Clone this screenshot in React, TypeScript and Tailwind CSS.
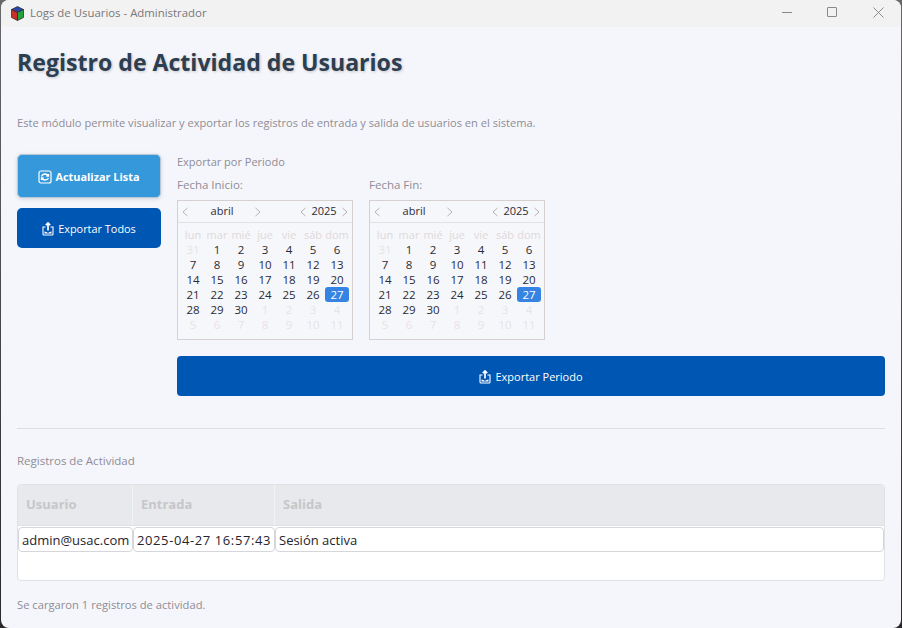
const font = "[font-family:'Open_Sans','Noto_Sans',sans-serif]";

const rows = [
  ['31', '1', '2', '3', '4', '5', '6'],
  ['7', '8', '9', '10', '11', '12', '13'],
  ['14', '15', '16', '17', '18', '19', '20'],
  ['21', '22', '23', '24', '25', '26', '27'],
  ['28', '29', '30', '1', '2', '3', '4'],
  ['5', '6', '7', '8', '9', '10', '11'],
];
const weekdays = ['lun', 'mar', 'mié', 'jue', 'vie', 'sáb', 'dom'];

function Chevron({ dir }: { dir: 'left' | 'right' }) {
  return (
    <svg width="8" height="10" viewBox="0 0 8 10" fill="none" stroke="#b4b4b8" strokeWidth="1">
      <path d={dir === 'left' ? 'M6.5 1 L2 5 L6.5 9' : 'M1.5 1 L6 5 L1.5 9'} />
    </svg>
  );
}

function ExportIcon() {
  return (
    <svg width="12" height="14" viewBox="0 0 12 14" fill="none" stroke="white" strokeWidth="1.1">
      <path d="M3.5 5 H1 V12 Q1 13 2 13 H10 Q11 13 11 12 V5 H8.5" />
      <path d="M6 8.5 V1 M3.8 3.2 L6 1 L8.2 3.2" strokeWidth="1.7" />
      <path d="M2.5 9.5 Q4.5 9.5 6 11 Q7.5 9.5 9.5 9.5 V11.5 H2.5 Z" fill="white" stroke="none" />
    </svg>
  );
}

function RefreshIcon() {
  return (
    <svg width="14" height="14" viewBox="0 0 14 14" fill="none" stroke="white" strokeWidth="1.2">
      <rect x="1" y="1" width="12" height="12" rx="2" />
      <path d="M3.5 6.5 Q4.5 4 7 4 Q9 4 10.5 6 M10.5 4 V6.2 H8.3" strokeWidth="1.3" />
      <path d="M10.5 8 Q9.5 10 7 10 Q5 10 3.5 8 M3.5 10 V7.8 H5.7" strokeWidth="1.3" />
    </svg>
  );
}

function Calendar() {
  return (
    <div className="w-[176px] h-[140px] border border-[#d6d0d0] bg-[#f6f7fb]">
      <div className="h-[22px] flex items-center border-b border-[#e2e0e2] text-[11px] text-[#2a2a35]">
        <div className="w-[3px]" />
        <Chevron dir="left" />
        <div className="w-[65px] pl-px text-center">abril</div>
        <Chevron dir="right" />
        <div className="flex-1" />
        <Chevron dir="left" />
        <div className="w-[34px] text-center">2025</div>
        <Chevron dir="right" />
        <div className="w-[3px]" />
      </div>
      <div className="grid grid-cols-[repeat(7,24px)] px-[3px] pt-[4px] text-[11.5px] leading-[15px] text-center whitespace-nowrap">
        {weekdays.map((d) => (
          <div key={d} className="text-[#e0d9d9] text-[11px]">{d}</div>
        ))}
        {rows.map((row, r) =>
          row.map((d, c) => {
            const muted = (r === 0 && c === 0) || (r === 4 && c > 2) || r === 5;
            const selected = d === '27';
            return (
              <div
                key={`${r}-${c}`}
                className={
                  selected
                    ? 'bg-[#3584e4] text-white rounded-[3px]'
                    : muted
                      ? 'text-[#e6e3e5]'
                      : 'text-[#2a2a35]'
                }
              >
                {d}
              </div>
            );
          })
        )}
      </div>
    </div>
  );
}

export default function App() {
  return (
    <div className={`w-[903px] h-[628px] bg-white overflow-hidden ${font}`}>
      <div className="w-[902px] h-[628px] pl-px pr-px bg-linear-to-b from-[#6a686a] to-[#2a282a]">
        <div className="w-[900px] h-[628px] rounded-[8px] bg-[#f5f6fb] overflow-hidden flex flex-col">
          {/* barra de titulo */}
          <div className="h-[27px] shrink-0 bg-[#f2f2f2] flex items-center pl-[9px]">
            <svg width="15" height="15" viewBox="0 0 15 15">
              <path d="M7.5 0.5 L13.5 3.5 L7.5 6.5 L1.5 3.5 Z" fill="#2b46a8" stroke="#222" strokeWidth="0.7" />
              <path d="M1.5 3.5 L7.5 6.5 V14.5 L1.5 11.5 Z" fill="#c9302c" stroke="#222" strokeWidth="0.7" />
              <path d="M13.5 3.5 L7.5 6.5 V14.5 L13.5 11.5 Z" fill="#22a33c" stroke="#222" strokeWidth="0.7" />
            </svg>
            <span className="ml-[5px] mb-px text-[11.4px] text-[#77777a]">Logs de Usuarios - Administrador</span>
            <div className="flex-1" />
            <div className="flex items-center mb-[3px]">
              <div className="w-[10px] h-px bg-[#8a8a8a] mr-[35px]" />
              <div className="w-[10px] h-[10px] border border-[#8a8a8a] rounded-[1px] mr-[36px]" />
              <svg width="11" height="11" viewBox="0 0 11 11" stroke="#8a8a8a" strokeWidth="1" className="mr-[17px]">
                <path d="M0.5 0.5 L10.5 10.5 M10.5 0.5 L0.5 10.5" />
              </svg>
            </div>
          </div>

          <div className="flex-1 pl-[16px] pr-[16px] flex flex-col">
            <h1 className="mt-[17px] text-[23.1px] leading-[36px] font-bold text-[#2c3e50] [text-shadow:1px_1px_3px_rgba(0,0,0,0.2)]">
              Registro de Actividad de Usuarios
            </h1>
            <p className="mt-[35px] text-[11.1px] leading-[16px] text-[#8f8c96]">
              Este módulo permite visualizar y exportar los registros de entrada y salida de usuarios en el sistema.
            </p>

            <div className="mt-[23px] flex gap-[16px]">
              <div className="w-[144px] flex flex-col gap-[9px]">
                <button className="h-[44px] pt-[2px] rounded-[5px] bg-[#3498db] border border-[#b8c8d8] text-white text-[10.9px] font-bold flex items-center justify-center gap-[3px] shadow-[0_1px_4px_rgba(0,0,0,0.15)]">
                  <RefreshIcon />
                  Actualizar Lista
                </button>
                <button className="h-[40px] mt-px pt-[2px] rounded-[5px] bg-[#0056b3] text-white text-[10.9px] flex items-center justify-center gap-[4px]">
                  <ExportIcon />
                  Exportar Todos
                </button>
              </div>
              <div className="flex-1">
                <div className="text-[11px] leading-[16px] text-[#8f8c96]">Exportar por Periodo</div>
                <div className="mt-[7px] flex gap-[16px]">
                  <div>
                    <div className="text-[11.5px] leading-[16px] text-[#8f8c96] mb-[7px]">Fecha Inicio:</div>
                    <Calendar />
                  </div>
                  <div>
                    <div className="text-[11.5px] leading-[16px] text-[#8f8c96] mb-[7px]">Fecha Fin:</div>
                    <Calendar />
                  </div>
                </div>
                <button className="mt-[16px] w-full h-[40px] pt-[2px] rounded-[4px] bg-[#0056b3] text-white text-[11px] flex items-center justify-center gap-[4px]">
                  <ExportIcon />
                  Exportar Periodo
                </button>
              </div>
            </div>

            <div className="mt-[32px] h-px bg-[#dcdde2]" />
            <div className="mt-[24px] text-[11.5px] leading-[16px] text-[#8f8c96]">Registros de Actividad</div>

            <div className="mt-[15px] h-[97px] rounded-[4px] border border-[#dfe1e5] bg-white overflow-hidden">
              <div className="h-[41px] bg-[#e7e9ec] grid grid-cols-[115px_142px_1fr] text-[13px] font-bold text-[#c6c7c9] border-b border-[#dfe1e5]">
                <div className="flex items-center pl-[8px] border-r border-[#f2f3f5]">Usuario</div>
                <div className="flex items-center pl-[8px] border-r border-[#f2f3f5]">Entrada</div>
                <div className="flex items-center pl-[8px]">Salida</div>
              </div>
              <div className="mt-px grid grid-cols-[115px_142px_1fr] text-[13px] text-[#24242e]">
                <div className="h-[25px] pt-[2px] flex items-center pl-[3px] bg-white border border-[#d4d6da] rounded-[4px] whitespace-nowrap">admin@usac.com</div>
                <div className="h-[25px] pt-[2px] flex items-center pl-[3px] bg-white border border-[#d4d6da] rounded-[4px] whitespace-nowrap tracking-[0.6px]">2025-04-27 16:57:43</div>
                <div className="h-[25px] pt-[2px] flex items-center pl-[3px] bg-white border border-[#d4d6da] rounded-[4px]">Sesión activa</div>
              </div>
            </div>

            <div className="mt-[16px] text-[11.2px] leading-[16px] text-[#8f8c96]">Se cargaron 1 registros de actividad.</div>
          </div>
        </div>
      </div>
    </div>
  );
}
